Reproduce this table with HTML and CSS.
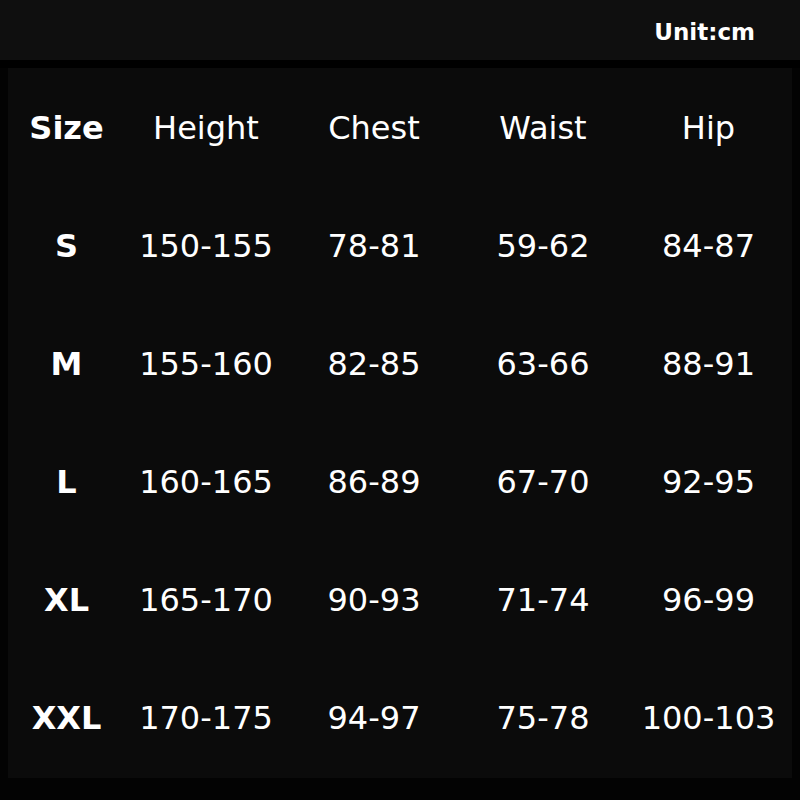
FILE: index.html
```html
<!DOCTYPE html>
<html>
<head>
<meta charset="utf-8">
<link rel="stylesheet" href="styles.css">
</head>
<body>
<div class="page">
  <header class="topbar"><span class="unit">Unit:cm</span></header>
  <div class="gap"></div>
  <div class="panel">
    <div class="chart">
      <div class="cell size">Size</div><div class="cell">Height</div><div class="cell">Chest</div><div class="cell">Waist</div><div class="cell">Hip</div>
      <div class="cell size">S</div><div class="cell">150-155</div><div class="cell">78-81</div><div class="cell">59-62</div><div class="cell">84-87</div>
      <div class="cell size">M</div><div class="cell">155-160</div><div class="cell">82-85</div><div class="cell">63-66</div><div class="cell">88-91</div>
      <div class="cell size">L</div><div class="cell">160-165</div><div class="cell">86-89</div><div class="cell">67-70</div><div class="cell">92-95</div>
      <div class="cell size">XL</div><div class="cell">165-170</div><div class="cell">90-93</div><div class="cell">71-74</div><div class="cell">96-99</div>
      <div class="cell size">XXL</div><div class="cell">170-175</div><div class="cell">94-97</div><div class="cell">75-78</div><div class="cell">100-103</div>
    </div>
  </div>
</div>
</body>
</html>
```

FILE: styles.css
```css
html, body {
  margin: 0;
  padding: 0;
  background: #000;
}
.page {
  width: 800px;
  height: 800px;
  background: #030303;
  display: flex;
  flex-direction: column;
}
.topbar {
  height: 60px;
  background: #0f0f0f;
  display: flex;
  align-items: center;
  justify-content: flex-end;
  padding-right: 45px;
  box-sizing: border-box;
}
.unit {
  font-family: "DejaVu Sans", sans-serif;
  font-weight: bold;
  font-size: 23px;
  color: #fff;
  line-height: 1;
  margin-top: 4px;
}
.gap {
  height: 8px;
  background: #000;
}
.panel {
  margin: 0 8px 0 8px;
  height: 710px;
  background: #0b0b0b;
  padding-top: 1px;
  box-sizing: border-box;
}
.chart {
  display: grid;
  grid-template-columns: 117px 162px 174px 164px 167px;
  grid-template-rows: repeat(6, 118px);
}
.cell {
  display: flex;
  align-items: center;
  justify-content: center;
  font-family: "DejaVu Sans", sans-serif;
  font-size: 32px;
  color: #fff;
  white-space: nowrap;
}
.size {
  font-weight: bold;
}
```
